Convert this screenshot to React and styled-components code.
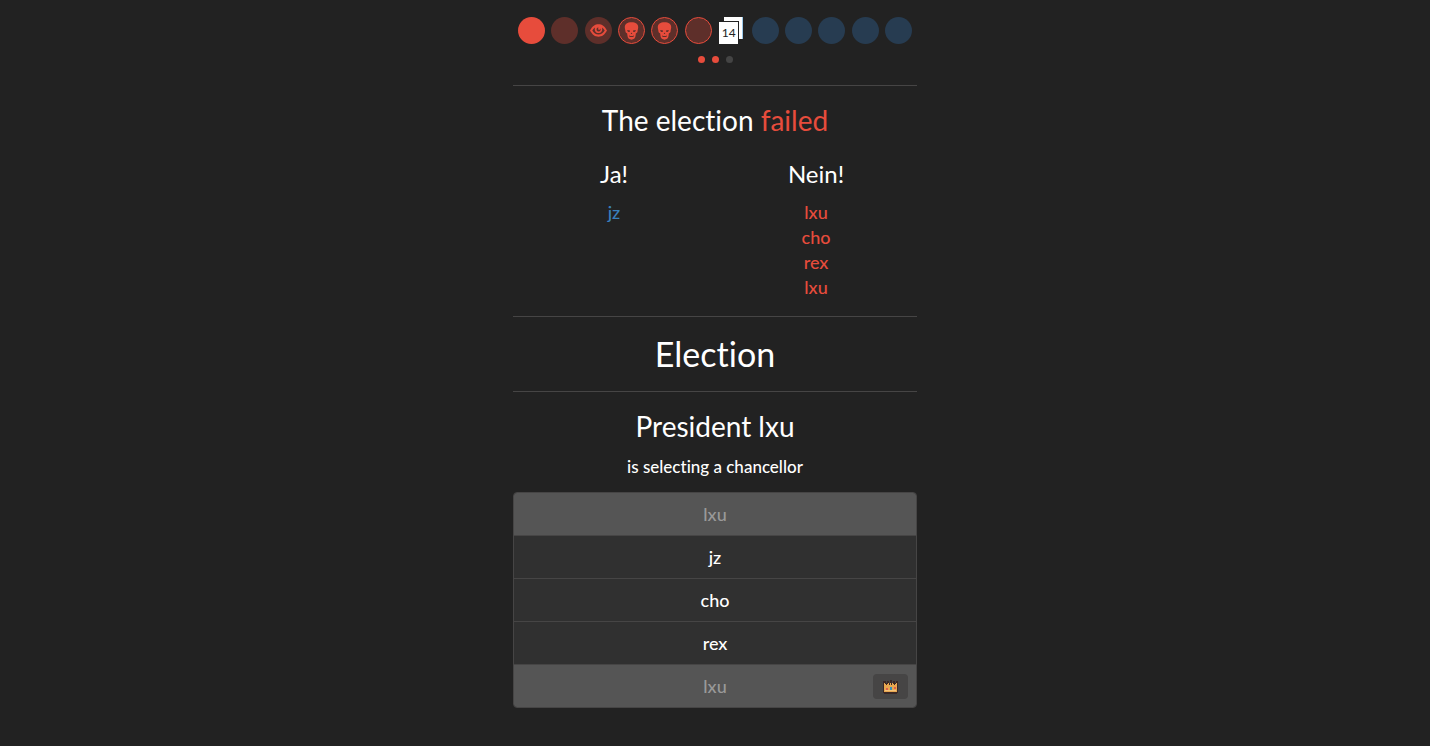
import React from "react";
import styled, { createGlobalStyle, css } from "styled-components";

const GlobalStyle = createGlobalStyle`
  *, *::before, *::after { box-sizing: border-box; }
  body {
    margin: 0;
    background: #222;
    color: #fff;
    font-family: Lato, "Liberation Sans", sans-serif;
    font-size: 18px;
    font-variant-ligatures: none;
  }
`;

const RED = "#e74c3c";
const BLUE = "#3980bd";

const Page = styled.main`
  width: 100%;
  max-width: 404px;
  margin: 0 auto;
  padding: 17px 0 38px;
  text-align: center;
`;

const Track = styled.div`
  display: flex;
  justify-content: space-between;
  padding: 0 5px;
`;

const slotColors = {
  red: css`background: ${RED};`,
  dimRed: css`background: #5e2f2a;`,
  blue: css`background: #273c51;`,
};

const Slot = styled.span`
  display: flex;
  align-items: center;
  justify-content: center;
  width: 27px;
  height: 27px;
  border-radius: 50%;
  color: ${RED};
  ${(p) => slotColors[p.$tone]}
  ${(p) => p.$ring && css`border: 1px solid ${RED};`}
`;

const Deck = styled.span`
  position: relative;
  width: 27px;
  height: 27px;
`;

const Card = styled.span`
  position: absolute;
  width: 19px;
  height: 22px;
  background: #fff;
  color: #222;
  font-size: 12px;
  line-height: 22px;
  ${(p) => (p.$front
    ? css`left: 1px; bottom: 0; box-shadow: 0 0 0 1px #222;`
    : css`right: 2px; top: 0; border-right: 1px solid #9cc9ea;`)}
`;

const Dots = styled.div`
  display: flex;
  justify-content: center;
  gap: 7px;
  margin: 12px 0 22px;
`;

const Dot = styled.span`
  width: 7px;
  height: 7px;
  border-radius: 50%;
  background: ${(p) => (p.$on ? RED : "#444")};
`;

const Rule = styled.hr`
  height: 1px;
  margin: 0;
  border: 0;
  background: #464545;
`;

const Section = styled.section`
  padding: ${(p) => (p.$last ? "17px 0 0" : "17px 0 16px")};
`;

const Phase = styled.h1`
  margin: 0 0 1px;
  font-size: 34px;
  line-height: 40px;
  font-weight: 400;
`;

const Heading = styled.h2`
  margin: 0;
  font-size: 28px;
  line-height: 34px;
  font-weight: 400;
`;

const Failed = styled.span`
  color: ${RED};
`;

const Votes = styled.div`
  display: grid;
  grid-template-columns: 1fr 1fr;
  margin-top: 24px;
`;

const VoteTitle = styled.h3`
  margin: 0 0 13px;
  font-size: 24px;
  line-height: 26px;
  font-weight: 400;
`;

const Voters = styled.ul`
  list-style: none;
  margin: 0;
  padding: 0;
  line-height: 25px;
  font-weight: 500;
  color: ${(p) => (p.$no ? RED : BLUE)};
`;

const Status = styled.p`
  margin: 14px 0 15px;
  font-size: 17px;
  line-height: 20px;
  font-weight: 500;
`;

const Players = styled.ul`
  list-style: none;
  margin: 0;
  padding: 0;
  border: 1px solid #464545;
  border-radius: 4px;
  overflow: hidden;
`;

const Player = styled.li`
  position: relative;
  & + & { border-top: 1px solid #464545; }
`;

const PlayerButton = styled.button`
  display: block;
  width: 100%;
  padding: 10px 16px;
  border: 0;
  background: #303030;
  color: #fff;
  font: inherit;
  font-weight: 500;
  line-height: 22px;
  cursor: pointer;
  &:disabled {
    background: #555;
    color: #999;
    cursor: default;
  }
`;

const Badge = styled.span`
  position: absolute;
  top: 9px;
  right: 8px;
  display: flex;
  align-items: center;
  justify-content: center;
  width: 35px;
  height: 25px;
  border-radius: 4px;
  background: #464545;
`;

const Eye = () => (
  <svg width="17" height="13" viewBox="0 0 17 13" aria-label="Investigate">
    <path fill="currentColor" fillRule="evenodd" d="M0 6.500C2.500 2 5 .3 8.500.3S14.500 2 17 6.500C14.500 11 12 12.700 8.500 12.700S2.500 11 0 6.500ZM2.300 6.500C4 9.300 5.800 10.500 8.500 10.500S13 9.300 14.700 6.500C13.900 5 13 4 12 3.400 12.800 6.800 11.300 9 8.500 9S4.200 6.800 5 3.400C4 4 3.100 5 2.300 6.500ZM6.800 4.200C6 6 7 7.400 8.600 7.400S11.200 6 10.500 4.200C10.300 5.500 9.500 6 8.700 5.800 8 5.600 8 4.600 8.500 3.600 7.800 3.500 7.200 3.700 6.800 4.200Z" />
  </svg>
);

const Skull = () => (
  <svg width="15" height="18" viewBox="0 0 15 18" aria-label="Execution">
    <path fill="currentColor" fillRule="evenodd" d="M7.500.3C3.300.3.8 2.100.8 5.300c0 1.500.5 2.500.6 3.700.1 1.400.7 2 1.700 2.200l.5 3.400c.3 1.800 1.800 3.100 3.900 3.100s3.600-1.300 3.900-3.100l.5-3.400c1-.2 1.600-.8 1.700-2.200.1-1.200.6-2.200.6-3.700C14.200 2.100 11.700.3 7.500.3ZM3.300 8l2.700.4c.1 1-.5 1.600-1.300 1.600S3.300 9.200 3.300 8ZM11.700 8l-2.700.4c-.1 1 .5 1.600 1.300 1.600s1.400-.8 1.400-2ZM7.500 10.500l.8 1.400H6.700ZM5 13.200l1.100.7h2.800l1.100-.7-.6 1.800H5.600Z" />
  </svg>
);

const Crown = () => (
  <svg width="15" height="14" viewBox="0 0 15 14" shapeRendering="crispEdges" aria-label="Previous president">
    <path d="M0 1h3v2h1V1h2v2h1V0h2v3h1V1h2v2h1V1h2v12h-1v1H1v-1H0Z" fill="#3a2826" />
    <path d="M1 3h1v1h1v1h1V4h1V3h1v2h1V3h1v2h1V3h1v1h1v1h1V4h1V3h1v9H1Z" fill="#e8a750" />
    <path d="M2 10h11v1H2Z" fill="#f5c47c" />
    <path d="M7 7h2v3H7Z" fill="#3b91b8" />
    <path d="M3 8h2v2H3ZM11 7h2v2h-2Z" fill="#df604d" />
  </svg>
);

const slots = [
  { tone: "red" },
  { tone: "dimRed" },
  { tone: "dimRed", icon: <Eye /> },
  { tone: "dimRed", ring: true, icon: <Skull /> },
  { tone: "dimRed", ring: true, icon: <Skull /> },
  { tone: "dimRed", ring: true },
];

const players = [
  { name: "lxu", disabled: true },
  { name: "jz" },
  { name: "cho" },
  { name: "rex" },
  { name: "lxu", disabled: true, crown: true },
];

export default function App() {
  return (
    <>
      <GlobalStyle />
      <Page>
        <Track>
          {slots.map((s, i) => (
            <Slot key={i} $tone={s.tone} $ring={s.ring}>{s.icon}</Slot>
          ))}
          <Deck>
            <Card />
            <Card $front>14</Card>
          </Deck>
          {[0, 1, 2, 3, 4].map((i) => <Slot key={i} $tone="blue" />)}
        </Track>
        <Dots>
          <Dot $on />
          <Dot $on />
          <Dot />
        </Dots>
        <Rule />
        <Section>
          <Heading>The election <Failed>failed</Failed></Heading>
          <Votes>
            <div>
              <VoteTitle>Ja!</VoteTitle>
              <Voters><li>jz</li></Voters>
            </div>
            <div>
              <VoteTitle>Nein!</VoteTitle>
              <Voters $no>
                <li>lxu</li>
                <li>cho</li>
                <li>rex</li>
                <li>lxu</li>
              </Voters>
            </div>
          </Votes>
        </Section>
        <Rule />
        <Section>
          <Phase>Election</Phase>
        </Section>
        <Rule />
        <Section $last>
          <Heading>President lxu</Heading>
          <Status>is selecting a chancellor</Status>
          <Players>
            {players.map((p, i) => (
              <Player key={i}>
                <PlayerButton type="button" disabled={p.disabled}>{p.name}</PlayerButton>
                {p.crown && <Badge><Crown /></Badge>}
              </Player>
            ))}
          </Players>
        </Section>
      </Page>
    </>
  );
}
